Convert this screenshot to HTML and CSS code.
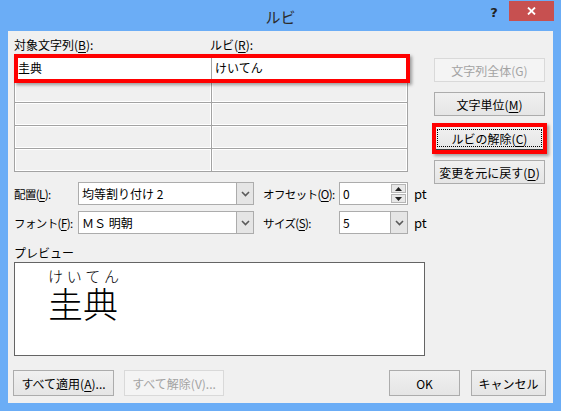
FILE: index.html
```html
<!DOCTYPE html>
<html lang="ja">
<head>
<meta charset="utf-8">
<title>ルビ</title>
<link rel="stylesheet" href="styles.css">
</head>
<body>
<div class="window">
  <div class="titlebar">
    <div class="title-spacer"></div>
    <div class="title">ルビ</div>
    <div class="controls">
      <span class="help">?</span>
      <span class="close"><svg width="9" height="8" viewBox="0 0 9 8"><path d="M1 0.5 L8 7.5 M8 0.5 L1 7.5" stroke="#fff" stroke-width="1.8" fill="none"/></svg></span>
    </div>
  </div>
  <div class="client">
    <div class="main-row">
      <div class="main">
        <div class="labels">
          <span class="lbl-base">対象文字列(<u>B</u>):</span>
          <span>ルビ(<u>R</u>):</span>
        </div>
        <div class="grid-wrap">
          <div class="grid">
            <div class="cell active">圭典</div><div class="cell active">けいてん</div>
            <div class="cell"></div><div class="cell"></div>
            <div class="cell"></div><div class="cell"></div>
            <div class="cell"></div><div class="cell"></div>
            <div class="cell"></div><div class="cell"></div>
          </div>
          <div class="mark mark-row"></div>
        </div>
        <div class="form-rows">
          <div class="form-row">
            <span class="f-label">配置(<u>L</u>):</span>
            <div class="combo wide">
              <span class="combo-text">均等割り付け 2</span>
              <span class="combo-btn"><svg width="9" height="6" viewBox="0 0 9 6"><path d="M1 1 L4.5 4.5 L8 1" fill="none" stroke="#5a5a5a" stroke-width="1.6"/></svg></span>
            </div>
            <span class="f-label2">オフセット(<u>O</u>):</span>
            <div class="combo small">
              <span class="combo-text">0</span>
              <span class="spin-btns">
                <span class="spin-btn"><svg width="7" height="4" viewBox="0 0 7 4"><path d="M0 4 L3.5 0 L7 4 Z" fill="#222"/></svg></span>
                <span class="spin-btn"><svg width="7" height="4" viewBox="0 0 7 4"><path d="M0 0 L3.5 4 L7 0 Z" fill="#222"/></svg></span>
              </span>
            </div>
            <span class="unit">pt</span>
          </div>
          <div class="form-row">
            <span class="f-label">フォント(<u>F</u>):</span>
            <div class="combo wide">
              <span class="combo-text">ＭＳ 明朝</span>
              <span class="combo-btn"><svg width="9" height="6" viewBox="0 0 9 6"><path d="M1 1 L4.5 4.5 L8 1" fill="none" stroke="#5a5a5a" stroke-width="1.6"/></svg></span>
            </div>
            <span class="f-label2">サイズ(<u>S</u>):</span>
            <div class="combo small">
              <span class="combo-text">5</span>
              <span class="combo-btn"><svg width="9" height="6" viewBox="0 0 9 6"><path d="M1 1 L4.5 4.5 L8 1" fill="none" stroke="#5a5a5a" stroke-width="1.6"/></svg></span>
            </div>
            <span class="unit">pt</span>
          </div>
        </div>
        <div class="preview-label">プレビュー</div>
        <div class="preview">
          <div class="ruby-group">
            <div class="ruby"><span>け</span><span>い</span><span>て</span><span>ん</span></div>
            <div class="base">圭典</div>
          </div>
        </div>
      </div>
      <div class="side">
        <button class="btn disabled">文字列全体(G)</button>
        <button class="btn">文字単位(<u>M</u>)</button>
        <div class="btn-wrap">
          <button class="btn default">ルビの解除(<u>C</u>)</button>
          <div class="mark mark-btn"></div>
        </div>
        <button class="btn">変更を元に戻す(<u>D</u>)</button>
      </div>
    </div>
    <div class="bottom-row">
      <button class="btn b-apply">すべて適用(<u>A</u>)...</button>
      <button class="btn disabled b-clear">すべて解除(V)...</button>
      <button class="btn b-ok">OK</button>
      <button class="btn b-cancel">キャンセル</button>
    </div>
  </div>
</div>
</body>
</html>
```

FILE: styles.css
```css
html, body {
  margin: 0;
  padding: 0;
}
body {
  font-family: "Noto Sans CJK JP", "Noto Sans", sans-serif;
  font-size: 12px;
  color: #000;
}
u {
  text-decoration: underline;
  text-underline-offset: 2px;
}
.window {
  width: 561px;
  height: 411px;
  background: #6badf6;
  display: flex;
  flex-direction: column;
  overflow: hidden;
}
.titlebar {
  height: 31px;
  flex: 0 0 31px;
  display: grid;
  grid-template-columns: 1fr auto 1fr;
  align-items: start;
}
.title {
  font-size: 15px;
  color: #2b2b2b;
  padding-top: 4px;
  line-height: 26px;
}
.controls {
  display: flex;
  justify-content: flex-end;
  align-items: flex-start;
  padding-right: 7px;
}
.help {
  font-family: "DejaVu Sans", sans-serif;
  font-weight: bold;
  font-size: 13px;
  color: #222;
  width: 14px;
  text-align: center;
  line-height: 20px;
  margin-top: 3px;
  margin-right: 8px;
}
.close {
  width: 45px;
  height: 20px;
  margin-top: 1px;
  background: #c75050;
  display: flex;
  align-items: center;
  justify-content: center;
}
.client {
  margin: 0 8px 8px;
  flex: 1;
  background: #f0f0f0;
  display: flex;
  flex-direction: column;
}
.main-row {
  display: flex;
}
.main {
  margin-left: 6px;
  width: 420px;
  display: flex;
  flex-direction: column;
}
.labels {
  height: 25px;
  box-sizing: border-box;
  padding-top: 6px;
  line-height: 16px;
  display: flex;
  white-space: nowrap;
}
.lbl-base {
  width: 196px;
}
.grid-wrap {
  position: relative;
  width: 394px;
}
.grid {
  display: grid;
  grid-template-columns: 196px 195px;
  grid-auto-rows: 22px;
  gap: 1px;
  padding: 1px;
  background: #a3a3a3;
}
.cell {
  background: #f0f0f0;
  box-shadow: inset 0 0 0 1px #fff;
  line-height: 22px;
  padding-left: 3px;
}
.cell.active {
  background: #fff;
  box-shadow: none;
}
.mark {
  position: absolute;
  border: 4px solid #ff0000;
  box-sizing: border-box;
  box-shadow: 2px 2px 3px rgba(0, 0, 0, 0.35);
  pointer-events: none;
}
.mark-row {
  left: 0;
  top: -2px;
  width: 396px;
  height: 29px;
}
.form-rows {
  margin-top: 10px;
  display: flex;
  flex-direction: column;
  gap: 6px;
}
.form-row {
  display: flex;
  align-items: center;
  height: 23px;
  white-space: nowrap;
}
.f-label,
.f-label2 {
  flex: 0 0 auto;
  font-size: 11.5px;
  letter-spacing: -0.6px;
}
.f-label {
  width: 64px;
}
.f-label2 {
  margin-left: 9px;
  width: 76px;
}
.combo {
  flex: 0 0 auto;
  height: 23px;
  box-sizing: border-box;
  border: 1px solid #acacac;
  background: #fff;
  display: flex;
}
.combo.wide {
  width: 176px;
}
.combo.small {
  width: 69px;
}
.combo-text {
  flex: 1;
  padding-left: 3px;
  line-height: 21px;
}
.combo-btn {
  width: 16px;
  border-left: 1px solid #acacac;
  background: #e5e5e5;
  display: flex;
  align-items: center;
  justify-content: center;
}
.spin-btns {
  width: 15px;
  display: flex;
  flex-direction: column;
  gap: 1px;
  padding: 1px 1px 1px 0;
}
.spin-btn {
  flex: 1;
  border: 1px solid #b5b5b5;
  background: #e8e8e8;
  display: flex;
  align-items: center;
  justify-content: center;
}
.unit {
  margin-left: 6px;
  font-size: 13px;
}
.preview-label {
  padding-top: 9px;
  line-height: 19px;
}
.preview {
  width: 411px;
  height: 94px;
  box-sizing: border-box;
  border: 1px solid #646464;
  background: #fff;
  padding: 4px 0 0 33px;
}
.ruby-group {
  display: inline-flex;
  flex-direction: column;
}
.ruby {
  display: flex;
  justify-content: space-between;
  width: 71px;
  font-size: 15px;
  line-height: 18px;
  font-weight: 300;
}
.base {
  font-size: 35px;
  line-height: 36px;
  font-weight: 300;
}
.side {
  margin-left: auto;
  margin-right: 8px;
  width: 111px;
  padding-top: 27px;
  display: flex;
  flex-direction: column;
  gap: 10px;
}
.btn {
  height: 24px;
  box-sizing: border-box;
  border: 1px solid #acacac;
  background: linear-gradient(#f0f0f0, #e5e5e5);
  font: inherit;
  color: #000;
  padding: 0;
  display: flex;
  align-items: center;
  justify-content: center;
  width: 100%;
  white-space: nowrap;
}
.btn.disabled {
  color: #a3a3a3;
  border-color: #d9d9d9;
  background: #f4f4f4;
}
.btn-wrap {
  position: relative;
}
.btn.default {
  border-color: #3a3a3a;
  outline: 1px dotted #000;
  outline-offset: -4px;
}
.mark-btn {
  left: -2px;
  top: -3px;
  right: -2px;
  bottom: -4px;
}
.bottom-row {
  margin-top: 14px;
  display: flex;
  gap: 10px;
  padding: 0 7px 0 5px;
}
.bottom-row .btn {
  height: 26px;
  flex: 0 0 auto;
}
.bottom-row .b-apply {
  width: 101px;
}
.bottom-row .b-clear {
  width: 100px;
}
.bottom-row .b-ok {
  width: 71px;
  margin-left: auto;
}
.bottom-row .b-cancel {
  width: 75px;
  margin-left: 1px;
}
```
